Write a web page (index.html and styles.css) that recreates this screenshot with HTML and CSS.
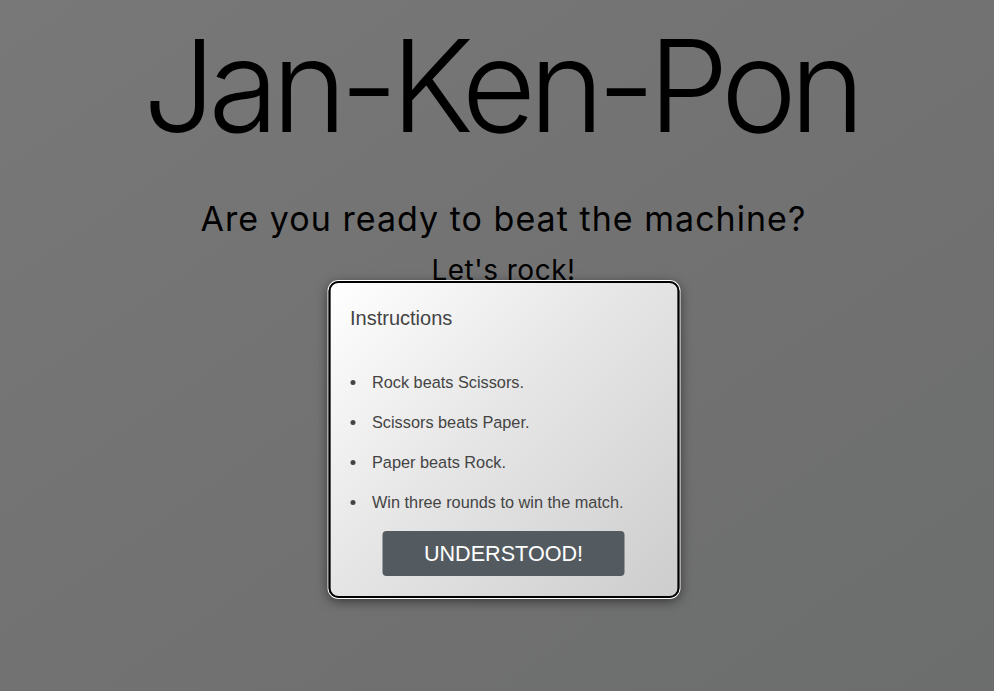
FILE: index.html
```html
<!DOCTYPE html>
<html lang="en">
<head>
<meta charset="utf-8">
<title>Jan-Ken-Pon</title>
<link rel="stylesheet" href="styles.css">
</head>
<body>
<main class="page">
  <h1 class="title">Jan-Ken-Pon</h1>
  <p class="subtitle">Are you ready to beat the machine?</p>
  <p class="cta">Let's rock!</p>

  <div class="modal" role="dialog" aria-labelledby="modal-title">
    <h2 class="modal-title" id="modal-title">Instructions</h2>
    <ul class="rules">
      <li>Rock beats Scissors.</li>
      <li>Scissors beats Paper.</li>
      <li>Paper beats Rock.</li>
      <li>Win three rounds to win the match.</li>
    </ul>
    <button class="btn" type="button">UNDERSTOOD!</button>
  </div>
</main>
</body>
</html>
```

FILE: styles.css
```css
html, body {
  margin: 0;
  padding: 0;
  height: 100%;
}

body {
  background: linear-gradient(to bottom right, #787878 0%, #727272 50%, #6c6d6d 100%);
  font-family: "Inter", "Liberation Sans", sans-serif;
  color: #000;
  overflow: hidden;
}

.page {
  position: relative;
  padding-left: 13px;
  display: flex;
  flex-direction: column;
  align-items: center;
  min-height: 100%;
  box-sizing: border-box;
}

.title {
  margin: 22px 0 0;
  padding-right: 6px;
  font-size: 128px;
  line-height: 1;
  font-weight: 300;
  letter-spacing: -7px;
}

.subtitle {
  margin: 50px 0 0;
  font-size: 34px;
  line-height: 38px;
  font-weight: 400;
  letter-spacing: 1.03px;
}

.cta {
  margin: 15px 0 0;
  font-size: 28px;
  line-height: 34px;
  font-weight: 400;
  letter-spacing: 0.5px;
}

.modal {
  position: absolute;
  top: 281px;
  left: calc(50% + 6.5px);
  transform: translateX(-50%);
  width: 307px;
  padding: 20px;
  border: 2px solid #000;
  border-radius: 10px;
  background: linear-gradient(135deg, #ffffff 0%, #e6e6e6 45%, #cdcdcd 100%);
  box-shadow: 0 0 0 1px #fff, 0 3px 12px rgba(0, 0, 0, 0.55);
  font-family: "Liberation Sans", Arial, sans-serif;
  color: #444;
  display: flex;
  flex-direction: column;
  align-items: center;
}

.modal-title {
  align-self: stretch;
  margin: 4px 0 0;
  font-size: 20px;
  line-height: 23px;
  font-weight: 400;
}

.rules {
  align-self: stretch;
  list-style: none;
  margin: 42px 0 0;
  padding: 0;
  font-size: 16.3px;
  line-height: 20px;
}

.rules li {
  display: flex;
  align-items: center;
  margin-bottom: 20px;
}

.rules li::before {
  content: "";
  flex: none;
  width: 5px;
  height: 5px;
  border-radius: 50%;
  background: #444;
  margin: 1px 17px 0 0;
}

.rules li:last-child {
  margin-bottom: 0;
}

.btn {
  margin-top: 19px;
  width: 242px;
  height: 45px;
  border: 0;
  border-radius: 4px;
  background: #545b60;
  color: #fff;
  font-family: "Liberation Sans", Arial, sans-serif;
  font-size: 21.6px;
  cursor: pointer;
}
```
